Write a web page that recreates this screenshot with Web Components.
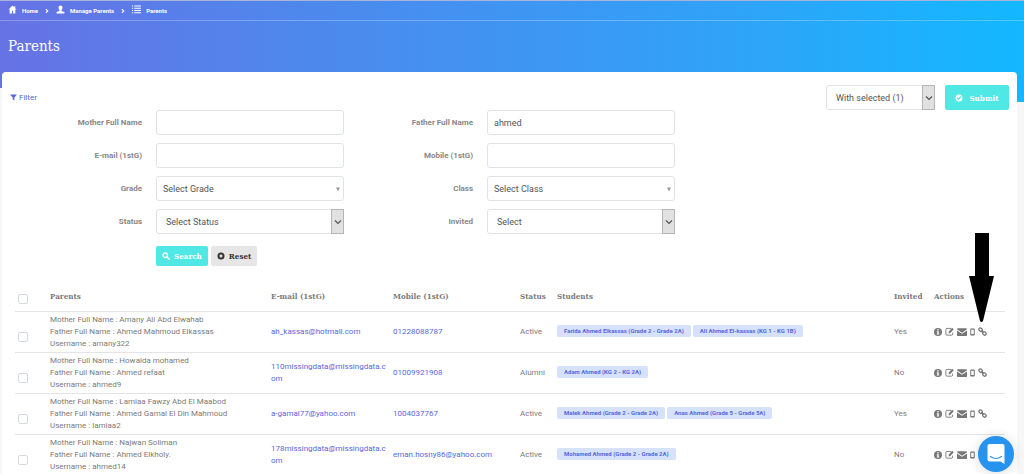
<!DOCTYPE html>
<html lang="en">
<head>
<meta charset="utf-8">
<meta name="viewport" content="width=device-width, initial-scale=1">
<title>Parents</title>
<style>
  body { margin: 0; background: #f7f7f8; font-family: Roboto, sans-serif; }
</style>
</head>
<body>
<parents-page></parents-page>

<script>
const ICONS = {
  home: '<path d="M8 1 1 8h2v7h4v-5h2v5h4V8h2l-2-2V2h-2v2z"/>',
  user: '<path d="M8 1c2.300 0 3.500 1.600 3.500 3.800C11.500 7 10.500 8.500 9.800 9v1.500L15 12.500V15H1v-2.500l5.200-2V9C5.500 8.500 4.500 7 4.500 4.800 4.500 2.600 5.700 1 8 1z"/>',
  list: '<path d="M0 1h2v1.500H0zM4 1h12v1.500H4zM0 5h2v1.500H0zM4 5h12v1.500H4zM0 9h2v1.500H0zM4 9h12v1.500H4zM0 13h2v1.500H0zM4 13h12v1.500H4z"/>',
  chevron: '<path d="m5 3 5 5-5 5" fill="none" stroke="currentColor" stroke-width="3"/>',
  filter: '<path d="M1 1h14v1.500L10 8v7l-4-3V8L1 2.500z"/>',
  check: '<path fill-rule="evenodd" d="M8 1a7 7 0 1 1 0 14A7 7 0 0 1 8 1zM3.500 8.500 7 12l5.800-5.800L11 4.500 7 8.500 5.200 6.700z"/>',
  search: '<circle cx="6.500" cy="6.500" r="4.500" fill="none" stroke="currentColor" stroke-width="2.600"/><path d="m10 10 4.500 4.500" stroke="currentColor" stroke-width="3" stroke-linecap="round"/>',
  reset: '<circle cx="8" cy="8" r="7"/><path d="m5.500 5.500 5 5m0-5-5 5" stroke="#e6e6e6" stroke-width="2.400"/>',
  info: '<path fill-rule="evenodd" d="M8 0a8 8 0 1 1 0 16A8 8 0 0 1 8 0zM6.500 2.500V5h3V2.500zM5.500 6.500V8h1v3.500h-1V13h5v-1.500h-1v-5z"/>',
  edit: '<path d="M11 2.500H3.500Q1.500 2.500 1.500 4.500v8q0 2 2 2h8q2 0 2-2V10" fill="none" stroke="currentColor" stroke-width="1.600"/><path d="m6.500 8.500 6.300-7L15.500 4l-6.500 7H6.500z"/>',
  mail: '<path d="M0 3.500Q0 2 1.500 2h13Q16 2 16 3.500L8 9 0 3.500z"/><path d="m0 5.500 8 5.300 8-5.300V13q0 1.500-1.500 1.500h-13Q0 14.500 0 13z"/>',
  phone: '<path fill-rule="evenodd" d="M5 1h6q1.500 0 1.500 1.500v11Q12.500 15 11 15H5q-1.500 0-1.500-1.500v-11Q3.500 1 5 1zm.5 2.500v8.500h5V3.500z"/>',
  link: '<g fill="none" stroke="currentColor" stroke-width="2.200"><rect x="1.200" y="2.200" width="7" height="5" rx="2.500" transform="rotate(45 4.700 4.700)"/><rect x="7.800" y="8.800" width="7" height="5" rx="2.500" transform="rotate(45 11.300 11.300)"/><path d="m6 6 4 4"/></g>'
};
const VIEW_BOXES = { phone: '3 0 10 16' };

class UiIcon extends HTMLElement {
  connectedCallback() {
    if (this.shadowRoot) return;
    const name = this.getAttribute('name');
    this.attachShadow({ mode: 'open' }).innerHTML = `
      <style>
        :host { display: inline-flex; width: 8px; height: 8px; flex: none; }
        svg { width: 100%; height: 100%; display: block; }
      </style>
      <svg viewBox="${VIEW_BOXES[name] || '0 0 16 16'}" fill="currentColor" aria-hidden="true">${ICONS[name]}</svg>`;
  }
}
customElements.define('ui-icon', UiIcon);

class PageHeader extends HTMLElement {
  constructor() {
    super();
    this.attachShadow({ mode: 'open' }).innerHTML = `
      <style>
        :host {
          display: block; box-sizing: border-box; height: 102px; color: #fff;
          border-top: 1px solid #a9b4dd;
          background: linear-gradient(90deg, #6772e5 0%, #5086ec 27%, #2fa3f8 72%, #13b8ff 100%);
          clip-path: polygon(0 0, 100% 0, 100% 100%, 50% 100%, 50% 88px, 0 88px);
        }
        nav {
          display: flex; align-items: center; height: 19px; padding: 0 8px;
          border-bottom: 1px solid #ffffff40; font-size: 6px; font-weight: 700;
        }
        a { display: flex; align-items: center; gap: 5px; color: inherit; text-decoration: none; }
        a ui-icon { width: 9px; height: 9px; margin-top: -2px; }
        .sep { width: 6px; height: 6px; margin: 0 6px; }
        h1 { margin: 15px 8px 0; font: 15px/20px "Roboto Slab", "DejaVu Serif Condensed", "DejaVu Serif", serif; }
      </style>
      <nav aria-label="Breadcrumb">
        <a href="#home"><ui-icon name="home"></ui-icon>Home</a><ui-icon class="sep" name="chevron"></ui-icon>
        <a href="#manage"><ui-icon name="user"></ui-icon>Manage Parents</a><ui-icon class="sep" name="chevron"></ui-icon>
        <a href="#parents"><ui-icon name="list"></ui-icon>Parents</a>
      </nav>
      <h1><slot></slot></h1>`;
  }
}
customElements.define('page-header', PageHeader);

class UiButton extends HTMLElement {
  constructor() {
    super();
    this.attachShadow({ mode: 'open' }).innerHTML = `
      <style>
        :host { display: inline-flex; }
        button {
          display: flex; align-items: center; justify-content: center; gap: 4px; width: 100%;
          height: 20px; padding: 0 6px; border: 0; border-radius: 2px; background: #4fe8e5; color: #fff;
          font: bold 8px/12px "Roboto Slab", "DejaVu Serif Condensed", "DejaVu Serif", serif; cursor: pointer;
        }
        :host([kind="plain"]) button { background: #e6e6e6; color: #333; }
        :host([size="large"]) button { height: 25px; padding: 0 10px; gap: 6px; }
      </style>
      <button type="button"><slot name="icon"></slot><span><slot></slot></span></button>`;
  }
}
customElements.define('ui-button', UiButton);

const FIELD_CSS = `
  :host { display: contents; }
  label { align-self: center; padding-right: 14px; text-align: right; font-size: 8px; line-height: 12px; font-weight: 700; color: #888; }
  .box { display: grid; min-width: 0; }
  input, select {
    grid-area: 1 / 1; box-sizing: border-box; width: 100%; height: 25px; margin: 0; padding: 0 6px;
    border: 1px solid #dfe3e8; border-radius: 3px; background: #fff; outline: 0;
    font: 9px/14px Roboto, sans-serif; color: #555; appearance: none;
  }
  .native select { padding-left: 9px; }
  .drop { grid-area: 1 / 1; justify-self: end; display: flex; align-items: center; justify-content: center; width: 13px; pointer-events: none; box-sizing: border-box; }
  .native .drop { border: 1px solid #b5b5b5; background: #e1e1e1; }
  svg { width: 8px; height: 6px; }
`;

class UiSelect extends HTMLElement {
  connectedCallback() {
    if (this.shadowRoot) return;
    const label = this.getAttribute('label');
    const bare = this.hasAttribute('bare');
    const look = this.getAttribute('look');
    this.attachShadow({ mode: 'open' }).innerHTML = `
      <style>${FIELD_CSS}</style>
      ${bare ? '' : `<label for="control">${label}</label>`}
      <div class="box ${look}">
        <select id="control" ${bare ? `aria-label="${label}"` : ''}><option>${this.getAttribute('value')}</option></select>
        <span class="drop" aria-hidden="true">${look === 'native'
          ? '<svg viewBox="0 0 8 6"><path d="m1 1.500 3 3 3-3" fill="none" stroke="#555" stroke-width="1.200"/></svg>'
          : '<svg viewBox="0 0 8 6"><path d="M2 1.500h4L4 5.500z" fill="#999"/></svg>'}</span>
      </div>`;
  }
}
customElements.define('ui-select', UiSelect);

class UiInput extends HTMLElement {
  connectedCallback() {
    if (this.shadowRoot) return;
    this.attachShadow({ mode: 'open' }).innerHTML = `
      <style>${FIELD_CSS}</style>
      <label for="control">${this.getAttribute('label')}</label>
      <div class="box"><input id="control" type="text" value="${this.getAttribute('value') || ''}"></div>`;
  }
}
customElements.define('ui-input', UiInput);

class SearchFilters extends HTMLElement {
  constructor() {
    super();
    this.attachShadow({ mode: 'open' }).innerHTML = `
      <style>
        :host { display: block; }
        form { display: grid; grid-template-columns: 154fr 188fr 143fr 188fr 342fr; row-gap: 8px; }
        .actions { grid-column: 2 / -1; display: flex; gap: 3px; margin-top: 4px; }
      </style>
      <form>
        <ui-input label="Mother Full Name"></ui-input><ui-input label="Father Full Name" value="ahmed"></ui-input><i></i>
        <ui-input label="E-mail (1stG)"></ui-input><ui-input label="Mobile (1stG)"></ui-input><i></i>
        <ui-select label="Grade" value="Select Grade" look="flat"></ui-select><ui-select label="Class" value="Select Class" look="flat"></ui-select><i></i>
        <ui-select label="Status" value="Select Status" look="native"></ui-select><ui-select label="Invited" value="Select" look="native"></ui-select><i></i>
        <div class="actions">
          <ui-button><ui-icon slot="icon" name="search"></ui-icon>Search</ui-button>
          <ui-button kind="plain"><ui-icon slot="icon" name="reset"></ui-icon>Reset</ui-button>
        </div>
      </form>`;
  }
}
customElements.define('search-filters', SearchFilters);

class StudentTag extends HTMLElement {
  constructor() {
    super();
    this.attachShadow({ mode: 'open' }).innerHTML = `
      <style>
        :host { display: inline-block; padding: 0 7px; border-radius: 2px; background: #d6e2fb; color: #5867dd; font-size: 6px; line-height: 12px; font-weight: 700; white-space: nowrap; }
      </style><slot></slot>`;
  }
}
customElements.define('student-tag', StudentTag);

const PARENTS = [
  { mother: 'Amany Ali Abd Elwahab', father: 'Ahmed Mahmoud Elkassas', user: 'amany322', email: 'ah_kassas@hotmail.com', mobile: '01228088787', status: 'Active', students: ['Farida Ahmed Elkassas (Grade 2 - Grade 2A)', 'Ali Ahmed El-kassas (KG 1 - KG 1B)'], invited: 'Yes' },
  { mother: 'Howaida mohamed', father: 'Ahmed refaat', user: 'ahmed9', email: '110missingdata@missingdata.com', mobile: '01009921908', status: 'Alumni', students: ['Adam Ahmed (KG 2 - KG 2A)'], invited: 'No' },
  { mother: 'Lamiaa Fawzy Abd El Maabod', father: 'Ahmed Gamal El Din Mahmoud', user: 'lamiaa2', email: 'a-gamal77@yahoo.com', mobile: '1004037767', status: 'Active', students: ['Malek Ahmed (Grade 2 - Grade 2A)', 'Anas Ahmed (Grade 5 - Grade 5A)'], invited: 'Yes' },
  { mother: 'Najwan Soliman', father: 'Ahmed Elkholy.', user: 'ahmed14', email: '178missingdata@missingdata.com', mobile: 'eman.hosny86@yahoo.com', status: 'Active', students: ['Mohamed Ahmed (Grade 2 - Grade 2A)'], invited: 'No' }
];

class ParentsTable extends HTMLElement {
  constructor() {
    super();
    const actions = [['info', 'Details'], ['edit', 'Edit'], ['mail', 'Send e-mail'], ['phone', 'Send message'], ['link', 'Link']]
      .map(([icon, label]) => `<a class="${icon}" href="#${icon}" aria-label="${label}"><ui-icon name="${icon}"></ui-icon></a>`).join('');
    const rows = PARENTS.map(p => `
      <tr>
        <td><input type="checkbox" aria-label="${p.user}"></td>
        <td>Mother Full Name : ${p.mother}<br>Father Full Name : ${p.father}<br>Username : ${p.user}</td>
        <td class="email"><a href="mailto:${p.email}">${p.email}</a></td>
        <td><a href="#mobile">${p.mobile}</a></td>
        <td>${p.status}</td>
        <td><div class="tags">${p.students.map(s => `<student-tag>${s}</student-tag>`).join('')}</div></td>
        <td>${p.invited}</td>
        <td><div class="tools">${actions}</div></td>
      </tr>`).join('');
    this.attachShadow({ mode: 'open' }).innerHTML = `
      <style>
        :host { display: block; }
        table { width: 100%; table-layout: fixed; border-collapse: collapse; font-size: 8px; line-height: 12px; color: #7b7b7b; }
        th, td { box-sizing: border-box; padding: 2px 3px; text-align: left; vertical-align: middle; border-bottom: 1px solid #e4e4e6; }
        th { height: 30px; font: bold 8px/12px "Roboto Slab", "DejaVu Serif Condensed", "DejaVu Serif", serif; white-space: nowrap; }
        td { height: 41px; }
        .c1 { width: 32px; } .c2 { width: 221px; } .c3 { width: 122px; } .c4 { width: 127px; }
        .c5 { width: 37px; } .c7 { width: 40px; } .c8 { width: 74px; }
        td a { color: #5867dd; text-decoration: none; }
        .email { overflow-wrap: anywhere; }
        input { appearance: none; display: block; width: 10px; height: 10px; margin: 6px 0 0; border: 1px solid #d5d9e2; border-radius: 2px; background: #fff; box-sizing: border-box; }
        td input { margin-top: 10px; }
        .tags { display: flex; gap: 2px; padding-bottom: 1px; }
        .tools { display: flex; align-items: center; gap: 3px; }
        .tools a { display: flex; color: #777; }
        .mail ui-icon { width: 10px; height: 10px; }
        .edit ui-icon, .link ui-icon { width: 9px; height: 9px; }
        .phone ui-icon { width: 5px; }
      </style>
      <table>
        <colgroup><col class="c1"><col class="c2"><col class="c3"><col class="c4"><col class="c5"><col><col class="c7"><col class="c8"></colgroup>
        <thead><tr><th><input type="checkbox" aria-label="Select all"></th><th>Parents</th><th>E-mail (1stG)</th><th>Mobile (1stG)</th><th>Status</th><th>Students</th><th>Invited</th><th>Actions</th></tr></thead>
        <tbody>${rows}</tbody>
      </table>`;
  }
}
customElements.define('parents-table', ParentsTable);

class ContentCard extends HTMLElement {
  constructor() {
    super();
    this.attachShadow({ mode: 'open' }).innerHTML = `
      <style>
        :host { display: block; position: relative; margin: -30px 7px 0 2px; border-radius: 4px 4px 0 0; background: #fff; }
      </style><slot></slot>`;
  }
}
customElements.define('content-card', ContentCard);

class ChatButton extends HTMLElement {
  constructor() {
    super();
    this.attachShadow({ mode: 'open' }).innerHTML = `
      <style>
        :host { position: fixed; right: 10px; bottom: 2px; display: block; }
        button { display: flex; align-items: center; justify-content: center; width: 36px; height: 36px; padding: 0; border: 0; border-radius: 50%; background: #2693ee; box-shadow: 0 1px 12px #00000026; cursor: pointer; }
        svg { width: 18px; height: 20px; }
      </style>
      <button type="button" aria-label="Open chat">
        <svg viewBox="0 0 18 20"><path d="M2.500 0h13Q17.500 0 17.500 2v18l-4-2.500h-11Q.5 17.500.5 15.500V2Q.5 0 2.500 0z" fill="#fff"/><path d="M3.500 12.500q5.500 4 11 0" fill="none" stroke="#2693ee" stroke-width="1.200" stroke-linecap="round"/></svg>
      </button>`;
  }
}
customElements.define('chat-button', ChatButton);

class ParentsPage extends HTMLElement {
  constructor() {
    super();
    this.attachShadow({ mode: 'open' }).innerHTML = `
      <style>
        :host { display: block; position: relative; height: 100vh; overflow: auto; scrollbar-width: none; }
        .toolbar { display: flex; align-items: center; gap: 10px; padding: 13px 8px 0; }
        .filter { display: flex; align-items: center; gap: 2px; margin-right: auto; font-size: 8px; line-height: 12px; color: #5867dd; text-decoration: none; }
        .filter ui-icon { width: 7px; height: 7px; }
        .bulk { display: block; width: 109px; }
        .submit { width: 64px; }
        .table { margin: 15px 12px 0 13px; }
        .pointer { position: absolute; right: 30px; top: 233px; width: 25px; height: 89px; }
      </style>
      <page-header>Parents</page-header>
      <content-card>
        <div class="toolbar">
          <a class="filter" href="#filter"><ui-icon name="filter"></ui-icon>Filter</a>
          <div class="bulk"><ui-select bare label="Bulk action" value="With selected (1)" look="native"></ui-select></div>
          <ui-button class="submit" size="large"><ui-icon slot="icon" name="check"></ui-icon>Submit</ui-button>
        </div>
        <search-filters></search-filters>
        <parents-table class="table"></parents-table>
      </content-card>
      <svg class="pointer" viewBox="0 0 25 89" aria-hidden="true"><path d="M6 0h14v43h5L14 88q-1.500 2-3 0L0 43h6z"/></svg>
      <chat-button></chat-button>`;
  }
}
customElements.define('parents-page', ParentsPage);
</script>
</body>
</html>
